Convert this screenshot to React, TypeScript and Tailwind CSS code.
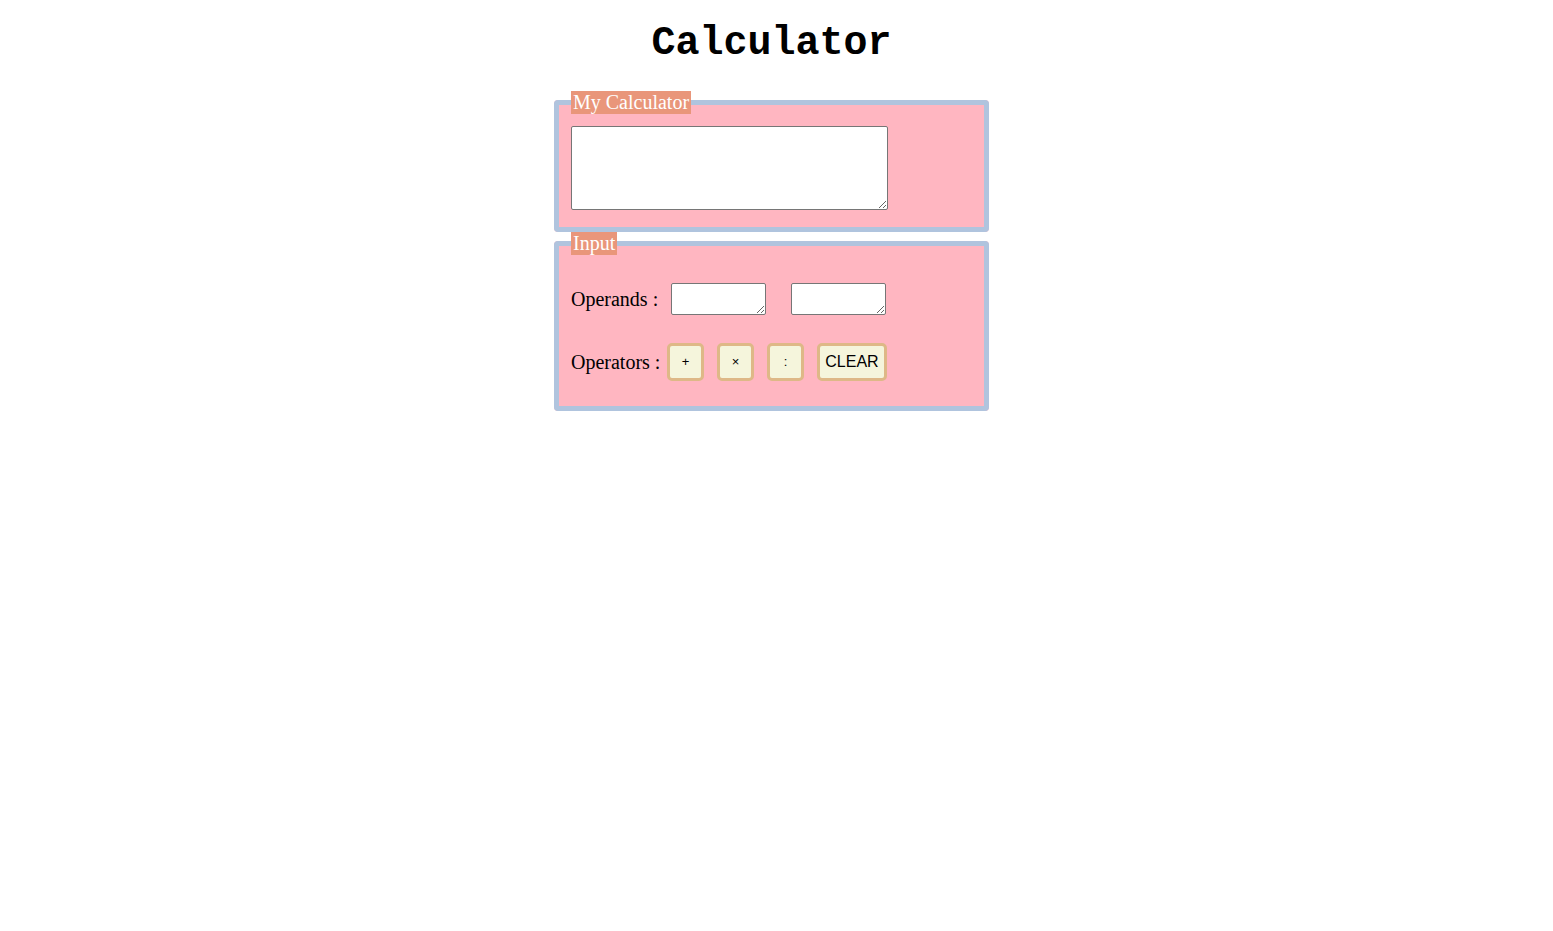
export default function App() {
  const ops = ['+', '×', ':'];

  return (
    <div className="min-h-screen bg-white flex flex-col items-center pr-[10px]">
      <h1 className="mt-[21px] w-full text-center text-[40px] leading-[45px] font-bold text-black [font-family:'Liberation_Mono','Courier_New',monospace]">
        Calculator
      </h1>

      <div className="mt-[25px] w-[435px] [font-family:'Liberation_Serif','Times_New_Roman',serif] text-[20px] text-black">
        {/* Output */}
        <fieldset className="w-[435px] border-[5px] border-solid border-[#b0c4de] rounded-[4px] bg-[#ffb6c1] px-[12px] pt-[12px] pb-[17px]">
          <legend className="px-[2px] bg-[#e9967a] text-white text-[20px] leading-[23px]">My Calculator</legend>
          <textarea className="block w-[317px] h-[84px] bg-white border border-solid border-[#767676] rounded-[2px]" />
        </fieldset>

        {/* Input */}
        <fieldset className="w-[435px] border-[5px] border-solid border-[#b0c4de] rounded-[4px] bg-[#ffb6c1] px-[12px] pt-[28px] pb-[25px]">
          <legend className="px-[2px] bg-[#e9967a] text-white text-[20px] leading-[23px]">Input</legend>

          <div className="flex items-center">
            <span className="w-[100px] leading-[23px]">Operands :</span>
            <textarea className="w-[95px] h-[32px] bg-white border border-solid border-[#767676] rounded-[2px]" />
            <textarea className="ml-[25px] w-[95px] h-[32px] bg-white border border-solid border-[#767676] rounded-[2px]" />
          </div>

          <div className="mt-[28px] flex items-center">
            <span className="w-[96px] leading-[23px]">Operators :</span>
            <div className="flex gap-[13px] [font-family:'Liberation_Sans',Arial,sans-serif]">
              {ops.map((op) => (
                <button
                  key={op}
                  className="w-[37px] h-[38px] flex items-center justify-center border-[3px] border-solid border-[#deb887] rounded-[5px] bg-[#f5f5dc] text-[13px] text-black"
                >
                  {op}
                </button>
              ))}
              <button className="w-[70px] h-[38px] flex items-center justify-center border-[3px] border-solid border-[#deb887] rounded-[5px] bg-[#f5f5dc] text-[16px] text-black">
                CLEAR
              </button>
            </div>
          </div>
        </fieldset>
      </div>
    </div>
  );
}
